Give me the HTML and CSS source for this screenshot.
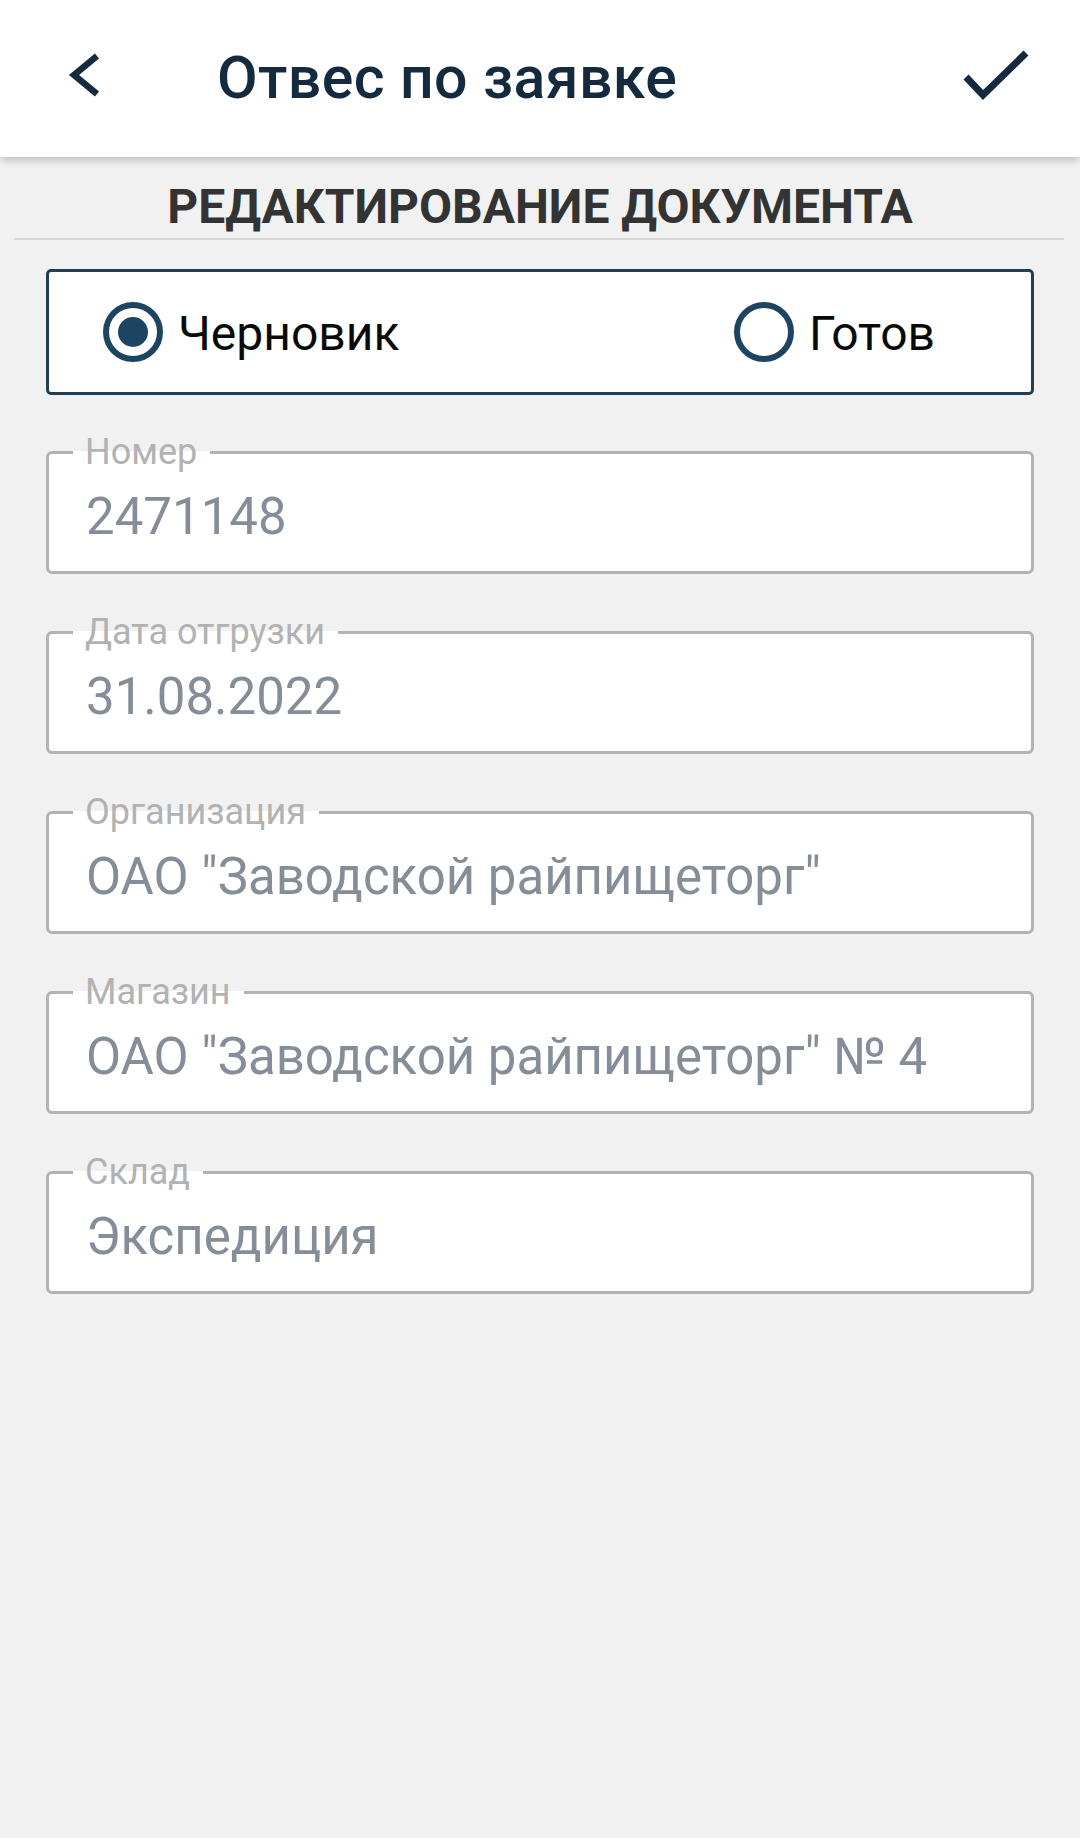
FILE: index.html
```html
<!DOCTYPE html>
<html lang="ru">
<head>
<meta charset="utf-8">
<title>Отвес по заявке</title>
<link rel="stylesheet" href="styles.css">
</head>
<body>
<header class="appbar">
  <svg class="icon-back" width="40" height="60" viewBox="0 0 40 60">
    <polyline points="33,7 10,26 33,45" fill="none" stroke="#142a3e" stroke-width="6.5"/>
  </svg>
  <h1 class="appbar-title">Отвес по заявке</h1>
  <svg class="icon-check" width="80" height="60" viewBox="0 0 80 60">
    <polyline points="6,30 23,48 66,6" fill="none" stroke="#142a3e" stroke-width="7"/>
  </svg>
</header>

<main class="content">
  <h2 class="section-title">РЕДАКТИРОВАНИЕ ДОКУМЕНТА</h2>
  <div class="divider"></div>

  <div class="status-box">
    <label class="radio">
      <span class="radio-circle checked"></span>
      <span class="radio-text">Черновик</span>
    </label>
    <label class="radio">
      <span class="radio-circle"></span>
      <span class="radio-text">Готов</span>
    </label>
  </div>

  <div class="field">
    <span class="field-label">Номер</span>
    <div class="field-value">2471148</div>
  </div>
  <div class="field">
    <span class="field-label">Дата отгрузки</span>
    <div class="field-value">31.08.2022</div>
  </div>
  <div class="field">
    <span class="field-label">Организация</span>
    <div class="field-value">ОАО "Заводской райпищеторг"</div>
  </div>
  <div class="field">
    <span class="field-label">Магазин</span>
    <div class="field-value">ОАО "Заводской райпищеторг" № 4</div>
  </div>
  <div class="field">
    <span class="field-label">Склад</span>
    <div class="field-value">Экспедиция</div>
  </div>
</main>
</body>
</html>
```

FILE: styles.css
```css
* { box-sizing: border-box; }

html, body {
  margin: 0;
  padding: 0;
}

body {
  width: 1080px;
  min-height: 1838px;
  background: #f1f1f1;
  font-family: Roboto, "Noto Sans", "Liberation Sans", sans-serif;
}

.appbar {
  position: relative;
  z-index: 1;
  height: 157px;
  background: #ffffff;
  display: flex;
  align-items: center;
  box-shadow: 0 3px 9px rgba(0, 0, 0, 0.22);
}

.icon-back {
  flex: none;
  margin-left: 64px;
  margin-top: 0;
}

.appbar-title {
  margin: -2px 0 0 113px;
  font-size: 59px;
  font-weight: 500;
  line-height: 66px;
  color: #142a3e;
  letter-spacing: 0.4px;
}

.icon-check {
  flex: none;
  margin-left: auto;
  margin-right: 40px;
  margin-top: -4px;
}

.content {
  display: flex;
  flex-direction: column;
}

.section-title {
  margin: 0;
  padding-top: 22px;
  font-size: 48px;
  line-height: 56px;
  font-weight: 700;
  color: #333333;
  text-align: center;
}

.divider {
  height: 2px;
  margin: 3px 16px 0 14px;
  background: #d8d8d8;
}

.status-box {
  margin: 29px 46px 0 46px;
  height: 126px;
  background: #ffffff;
  border: 3px solid #223f53;
  border-radius: 5px;
  display: flex;
  align-items: center;
  justify-content: space-between;
  padding: 0 96px 0 54px;
}

.radio {
  display: flex;
  align-items: center;
  gap: 15px;
}

.radio-circle {
  position: relative;
  width: 60px;
  height: 60px;
  border: 6px solid #1d4460;
  border-radius: 50%;
  flex: none;
}

.radio-circle.checked::after {
  content: "";
  position: absolute;
  left: 9px;
  top: 9px;
  width: 30px;
  height: 30px;
  border-radius: 50%;
  background: #1d4460;
}

.radio-text {
  font-size: 48px;
  line-height: 60px;
  padding-top: 4px;
  color: #0a0a0a;
}

.field {
  position: relative;
  margin: 57px 46px 0 46px;
  height: 123px;
  background: #ffffff;
  border: 3px solid #b3b3b3;
  border-radius: 6px;
  padding: 33px 20px 0 37px;
}

.status-box + .field {
  margin-top: 56px;
}

.field-label {
  position: absolute;
  left: 24px;
  top: -20px;
  padding: 0 13px 0 12px;
  font-size: 36px;
  line-height: 36px;
  color: #b2b2b2;
  background: linear-gradient(to bottom, #f1f1f1 0, #f1f1f1 17px, #ffffff 17px, #ffffff 100%);
}

.field-value {
  font-size: 51px;
  line-height: 60px;
  color: #858e98;
  white-space: nowrap;
}
```
